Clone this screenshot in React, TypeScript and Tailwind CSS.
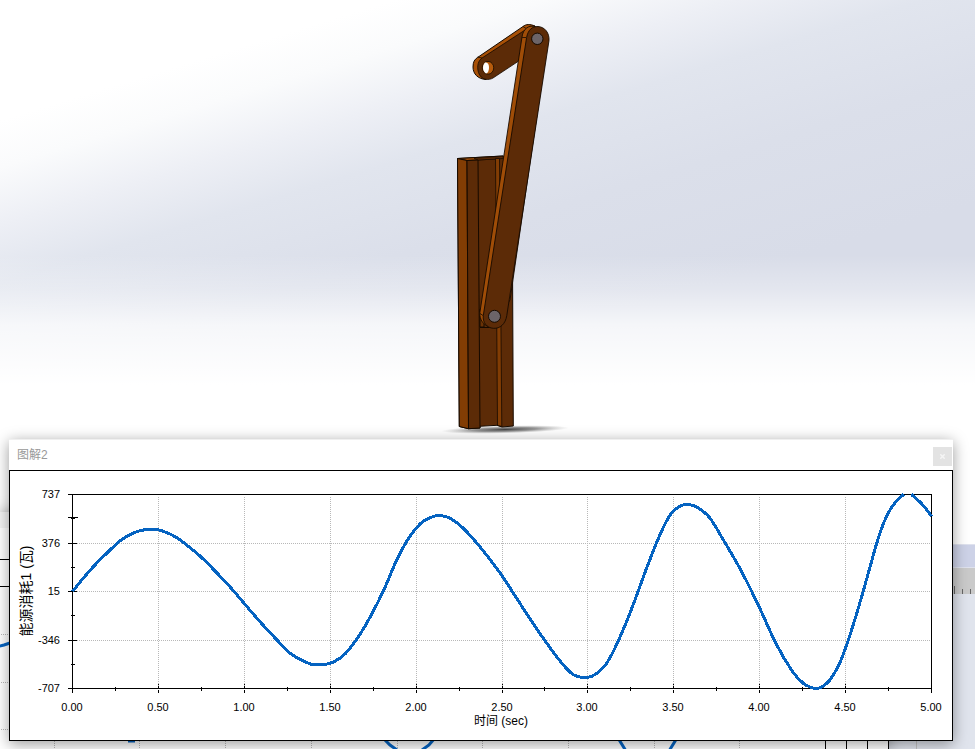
import { X } from "lucide-react";

type Point = [number, number];

const PLOT = { left: 62, right: 921, top: 23, bottom: 217 };

const xLabels = ["0.00", "0.50", "1.00", "1.50", "2.00", "2.50", "3.00", "3.50", "4.00", "4.50", "5.00"];
const yLabels = ["737", "376", "15", "-346", "-707"];

const mainCurve: Point[] = [
  [62, 120], [70, 110], [83, 95], [98, 80], [110, 69], [118, 64], [127, 60], [136, 58], [146, 58],
  [156, 61], [166, 66], [178, 75], [190, 85], [206, 101], [221, 117], [238, 137], [252, 153],
  [266, 168], [280, 182], [292, 189], [302, 193], [314, 193], [324, 190], [335, 182], [348, 165],
  [360, 145], [374, 117], [386, 89], [398, 67], [410, 52], [420, 46], [430, 44], [440, 47],
  [452, 56], [470, 76], [490, 102], [505, 125], [520, 148], [535, 170], [550, 190], [560, 201],
  [567, 205], [577, 206], [586, 202], [596, 192], [608, 169], [622, 135], [636, 97], [650, 62],
  [660, 43], [669, 35], [678, 33], [687, 36], [699, 46], [712, 67], [730, 98], [748, 134],
  [766, 173], [782, 200], [793, 212], [801, 216], [806, 217], [812, 215], [819, 209], [829, 192],
  [838, 168], [848, 136], [858, 101], [868, 66], [876, 45], [884, 32], [893, 23],
];

const tailCurve: Point[] = [[901, 23], [911, 32], [916, 38], [921, 45]];

function slope(pts: Point[], i: number) {
  const a = pts[Math.max(i - 1, 0)];
  const b = pts[Math.min(i + 1, pts.length - 1)];
  return (b[1] - a[1]) / (b[0] - a[0]);
}

// Hermite curve through the samples, which are unevenly spaced in x
function smooth(pts: Point[]) {
  let d = `M${pts[0][0]} ${pts[0][1]}`;
  for (let i = 0; i < pts.length - 1; i++) {
    const [x0, y0] = pts[i];
    const [x1, y1] = pts[i + 1];
    const h = (x1 - x0) / 3;
    d += `C${x0 + h} ${y0 + h * slope(pts, i)} ${x1 - h} ${y1 - h * slope(pts, i + 1)} ${x1} ${y1}`;
  }
  return d;
}

const gridX = (i: number) => Math.round(PLOT.left + ((PLOT.right - PLOT.left) * i) / 20);
const gridY = (i: number) => Math.round(PLOT.top + ((PLOT.bottom - PLOT.top) * i) / 8);

function Chart() {
  const { left, right, top, bottom } = PLOT;
  return (
    <svg viewBox="0 0 942 269" className="block h-auto w-full font-['Liberation_Sans','Noto_Sans_CJK_SC',sans-serif]">
      <g stroke="#b8b8b8" strokeDasharray="1 1" shapeRendering="crispEdges" transform="translate(.5 .5)">
        {[2, 4, 6, 8, 10, 12, 14, 16, 18].map((i) => (
          <line key={i} x1={gridX(i)} x2={gridX(i)} y1={top + 2} y2={bottom} />
        ))}
        {[2, 4, 6].map((i) => (
          <line key={i} x1={left} x2={right} y1={gridY(i)} y2={gridY(i)} />
        ))}
      </g>

      <g stroke="#000" fill="none" shapeRendering="crispEdges" transform="translate(.5 .5)">
        <rect x={left} y={top} width={right - left} height={bottom - top} />
        {Array.from({ length: 21 }, (_, i) =>
          i % 2 === 0 ? (
            <path key={i} d={`M${gridX(i)} ${bottom - 5}v9`} strokeDasharray={i % 20 ? "1 1 3 1 3" : undefined} />
          ) : (
            <path key={i} d={`M${gridX(i)} ${bottom - 2}v4`} />
          )
        )}
        {Array.from({ length: 9 }, (_, i) =>
          i % 2 === 0 ? (
            <path key={i} d={`M${left - 5} ${gridY(i)}h${i % 8 ? 9 : 5}`} />
          ) : (
            <path key={i} d={i === 1 ? `M${left - 5} ${gridY(i) - 1}h10M${left - 2} ${gridY(i)}h4` : `M${left - 2} ${gridY(i)}h4`} />
          )
        )}
      </g>

      <g stroke="#0563c1" strokeWidth="3" fill="none" shapeRendering="crispEdges" strokeLinejoin="round" transform="translate(.5 .5)">
        <path d={smooth(mainCurve)} />
        <path d={smooth(tailCurve)} />
      </g>

      <g fontSize="11" fill="#000">
        {xLabels.map((label, i) => (
          <text key={label} x={gridX(i * 2)} y="240" textAnchor="middle">
            {label}
          </text>
        ))}
        {yLabels.map((label, i) => (
          <text key={label} x="50" y={gridY(i * 2) + 4} textAnchor="end">
            {label}
          </text>
        ))}
      </g>
      <text x="491" y="254" textAnchor="middle" fontSize="12">
        时间 (sec)
      </text>
      <text transform="translate(21 120) rotate(-90)" textAnchor="middle" fontSize="14">
        能源消耗1 (瓦)
      </text>
    </svg>
  );
}

function Mechanism() {
  return (
    <svg viewBox="400 0 175 439" className="block h-[439px] w-[175px]" aria-hidden="true">
      <defs>
        <radialGradient id="ground">
          <stop offset="0" stopColor="#222" stopOpacity=".85" />
          <stop offset=".5" stopColor="#555" stopOpacity=".6" />
          <stop offset="1" stopColor="#999" stopOpacity="0" />
        </radialGradient>
      </defs>
      <ellipse cx="505" cy="429.5" rx="64" ry="4" fill="url(#ground)" transform="rotate(-1.5 505 429.5)" />

      {/* slide rail */}
      <g stroke="#160a00" strokeWidth="1" strokeLinejoin="round">
        <path d="M457.5 158.5L503 156L512 160L513.3 426L502 427L497 425.3L480 426.3V428L468.5 428.7L459.3 426.5Z" fill="#5c2b07" />
        <path d="M457.5 158.5L503 156L502 158.5L478 160L467 160.5Z" fill="#a14e07" />
        <path d="M474 158.4L503 156.5V158.5L478 160Z" fill="#5c2b07" strokeWidth=".6" />
        <path d="M457.5 158.5L467 160.5L468.5 428.7L459.3 426.5Z" fill="#823d04" />
        <path d="M467 160.5L478 160L480 428L468.5 428.7Z" fill="#5c2b07" />
        <path d="M495.5 158.5L499.5 158.5L501.8 426.5L497.5 425.3Z" fill="#823d04" strokeWidth=".8" />
        <path d="M480 309h4v18h-4Z" fill="#6b3306" />
        <path d="M480 327.5h9" fill="none" />
      </g>

      {/* crank */}
      <g stroke="#160a00" strokeWidth="1" strokeLinejoin="round">
        <path d="M486 79.5C478 79 473 74 473 67C473 62 474.5 59.5 477.5 57.5L523 26.5C526 24 530 24 535 26L530 44L488 68Z" fill="#a85006" />
        <path d="M482 58L523.5 31C527 28 533 30 533 38L518 61.5L493 78C489 80.5 481 80.5 478.5 72.5C476.5 65.5 478.5 60.5 482 58Z" fill="#5c2b07" strokeWidth=".8" />
        <path d="M477.5 57L482 58M523 26.5L527 29L535 26" fill="none" strokeWidth=".8" />
        <ellipse cx="488" cy="67.8" rx="5.7" ry="6.4" fill="#b65b0c" strokeWidth=".8" />
        <path d="M485 62.6C487.6 61.6 489 64.4 489 67.2C489 70.8 487.6 73.4 486 73.4C482.4 71.6 482 65.6 485 62.6Z" fill="#fff" stroke="none" />
      </g>

      {/* connecting rod */}
      <g stroke="#160a00" strokeWidth="1" strokeLinejoin="round">
        <path d="M536 27C529 24 523 29 522 37L479.8 313C479.5 319 483 325.5 491 327.5L510 300L545 60Z" fill="#a04d07" strokeWidth=".9" />
        <path d="M526.6 37.5C528 30 532 26.4 538 26.5C545 27 549.5 33 549 40.5L506.8 315.5C505.5 324 500 328.8 493.5 328.3C486.5 328 482.4 322 483.3 315.5Z" fill="#5c2b07" strokeWidth=".9" />
        <path d="M522.2 37.5L526 37.5M480 313.5L483 315.5" fill="none" strokeWidth=".8" />
        <circle cx="537.3" cy="38.8" r="5.7" fill="#6c6468" />
        <circle cx="494.5" cy="316.3" r="6" fill="#6c6468" />
      </g>
    </svg>
  );
}

function TimelinePanel() {
  return (
    <div className="absolute inset-x-0 top-[544px] bottom-0 flex flex-col bg-[#e0e4ed]">
      <div className="h-6 border-y border-[#dfe2ee] bg-[#cdd2e7]" />
      <div className="flex h-[26px] items-end justify-end gap-[7px] bg-[#cacaca] pr-1">
        <span className="h-2 w-px bg-[#666666]" />
        <span className="h-[5px] w-px bg-[#666666]" />
        <span className="h-[5px] w-px bg-[#666666]" />
      </div>
      <div className="mr-[58px] flex-1 border-r border-[#c4c4c4]" />
    </div>
  );
}

function BackPlotWindow() {
  return (
    <div className="absolute top-[512px] bottom-0 left-0 right-[86px] border-r border-black bg-white shadow-[0_0_14px_rgba(0,0,0,0.35)]">
      <div className="h-4 bg-[#f4f4f4]" />
      <svg viewBox="0 528 888 221" className="block w-full" aria-hidden="true">
        <g stroke="#b8b8b8" strokeDasharray="1 1" shapeRendering="crispEdges" transform="translate(.5 .5)">
          {[634, 682, 729].map((y) => (
            <line key={y} x1="0" x2="825" y1={y} y2={y} />
          ))}
          {[54, 139, 225, 311, 397, 482, 568, 654, 739].map((x) => (
            <line key={x} x1={x} x2={x} y1="560" y2="749" />
          ))}
        </g>
        <path d="M0 559.5H888M0 586.5H825M825.5 586V749M846.5 560V749M867.5 560V749" stroke="#000" shapeRendering="crispEdges" />
        <path
          d="M-2 646.5L4 645L10 643M128 741H135M384 739L390 745L397 750M434 739L429 745L422 750M618 738L626 751M677 738L669 751"
          stroke="#0563c1"
          strokeWidth="3"
          fill="none"
        />
      </svg>
    </div>
  );
}

function PlotWindow() {
  return (
    <section className="relative mr-[22px] ml-[9px] bg-white shadow-[0_3px_14px_rgba(0,0,0,0.4)]">
      <header className="flex h-[31px] items-center justify-between border-t border-[#f0f0f0] pr-px pl-2">
        <h1 className="text-xs text-[#999999]">图解2</h1>
        <button
          type="button"
          aria-label="关闭"
          className="mt-0.5 flex size-[19px] items-center justify-center bg-[#e3e3e3] text-[#f5f5f5]"
        >
          <X size={7} strokeWidth={5} />
        </button>
      </header>
      <div className="border border-black">
        <Chart />
      </div>
    </section>
  );
}

export default function App() {
  return (
    <main className="relative min-h-screen overflow-hidden bg-white font-['Liberation_Sans','Noto_Sans_CJK_SC',sans-serif]">
      {/* studio backdrop: diagonal sky fading into a white floor */}
      <div className="absolute inset-0 bg-[linear-gradient(180deg,transparent_255px,rgba(255,255,255,0.3)_290px,rgba(255,255,255,0.75)_325px,#fff_385px),linear-gradient(163deg,#fff_115px,#fafbfc_160px,#edeff5_215px,#e1e5ee_270px,#dbdfea_360px,#d8dce8_480px)]" />
      <TimelinePanel />
      <BackPlotWindow />
      <div className="relative flex justify-center">
        <Mechanism />
      </div>
      <PlotWindow />
    </main>
  );
}
